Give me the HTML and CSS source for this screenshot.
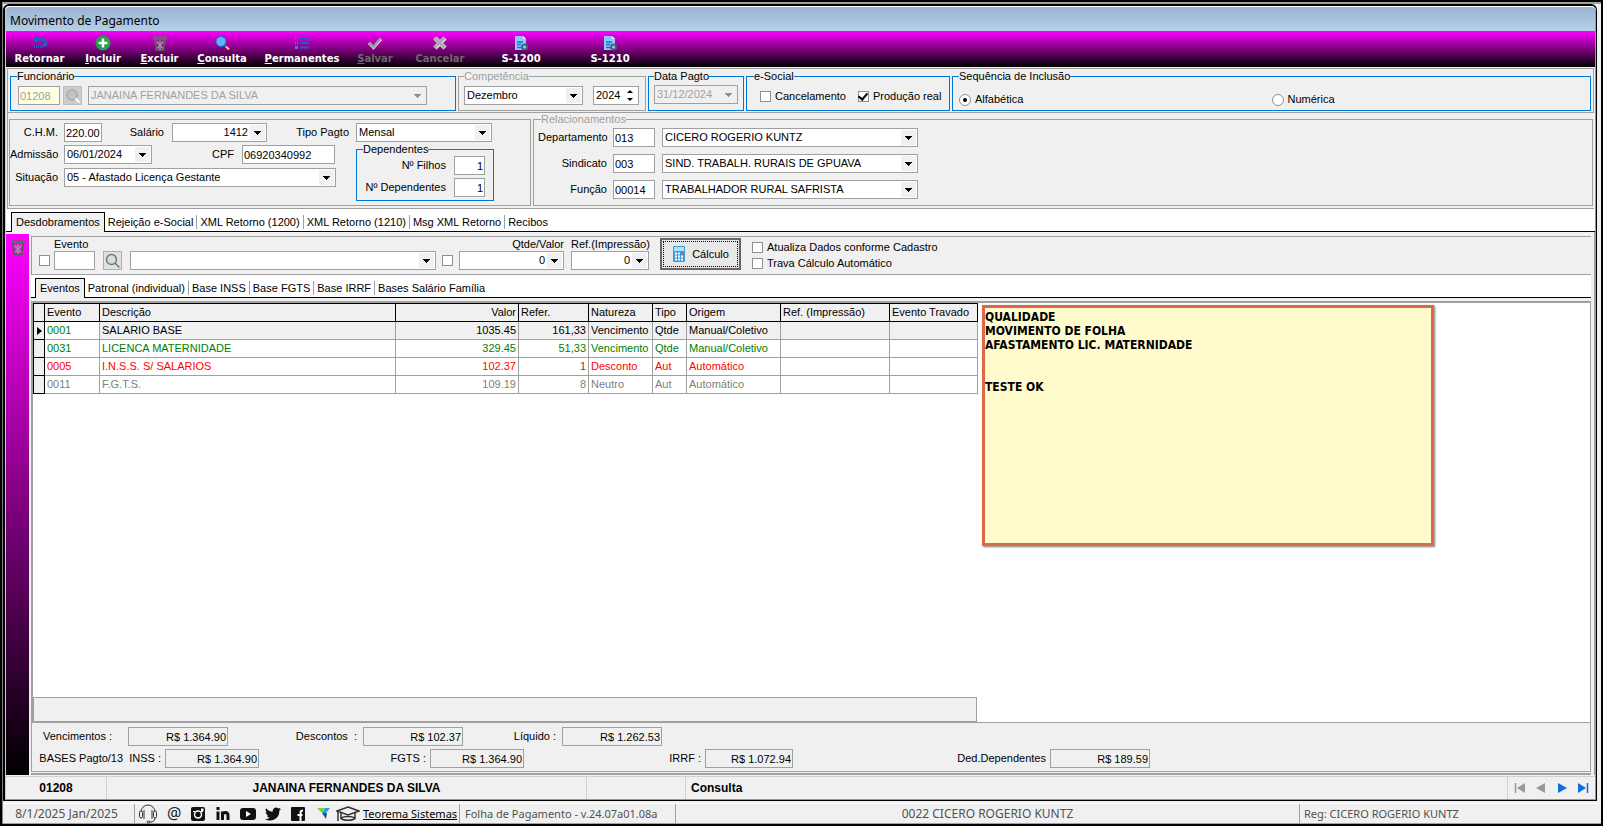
FILE: index.html
```html
<!DOCTYPE html>
<html lang="pt-BR">
<head>
    <meta charset="UTF-8">
    <meta name="viewport" content="width=device-width, initial-scale=1.0">
    <title>Movimento de Pagamento</title>
    <link rel="stylesheet" href="styles.css">
</head>
<body>
<div class="shell">
    <div class="window">
    <div class="window-inner">
        <h1 class="title-bar">Movimento de Pagamento</h1>

        <!-- Toolbar -->
        <div class="toolbar">
            <button type="button">
                <svg width="16" height="16" viewBox="0 0 16 16"><path d="M4 4.500h6.500q3 0 3 3V10H11" fill="none" stroke="#1565c8" stroke-width="2.500"/><path d="M5.500 0 1 4.500l4.500 4z" fill="#1565c8"/><path d="M2.500 10v3M4.500 10v3M6.500 10v3M8.500 10v3M10.500 10v3" stroke="#1565c8"/></svg>
                <span>Retornar</span>
            </button>
            <button type="button">
                <svg width="16" height="16" viewBox="0 0 16 16"><circle cx="8" cy="8" r="7.500" fill="#22a04b"/><path d="M8 3.500v9M3.500 8h9" stroke="#fff" stroke-width="2.500"/></svg>
                <span><u>I</u>ncluir</span>
            </button>
            <button type="button">
                <svg width="16" height="16" viewBox="0 0 16 16"><path d="M1 1.500h14v3.500H1z" fill="#666"/><path d="M3 5l1.500 10h7L13 5" fill="none" stroke="#5a5a5a" stroke-width="2"/><path d="M4.500 6.500l6.500 7M11.500 6.500l-6.500 7M8 5.500v3M8 12v3" stroke="#999" stroke-width="1.500"/></svg>
                <span><u>E</u>xcluir</span>
            </button>
            <button type="button">
                <svg width="16" height="16" viewBox="0 0 16 16"><circle cx="7" cy="6.500" r="5" fill="#5cb3fa" stroke="#1c6fc0" stroke-width="1"/><path d="M10.500 10l2 2" stroke="#1c6fc0" stroke-width="2"/><path d="M12 11.500l3 3" stroke="#f3d45c" stroke-width="2"/></svg>
                <span><u>C</u>onsulta</span>
            </button>
            <button type="button">
                <svg width="16" height="16" viewBox="0 0 16 16"><path d="M1 3h3M1 8h3" stroke="#c8452e" stroke-width="3" stroke-dasharray="1 1"/><path d="M1 12.500h3" stroke="#2e8bd8" stroke-width="3"/><path d="M6 3h9M6 8h9M6 12.500h9" stroke="#1b62b8" stroke-width="2"/></svg>
                <span><u>P</u>ermanentes</span>
            </button>
            <button type="button" disabled>
                <svg width="16" height="16" viewBox="0 0 16 16"><path d="M2 8l4.500 4.500L14 4" fill="none" stroke="#eee" stroke-width="3"/><path d="M2 8l4.500 4L13.500 3.500" fill="none" stroke="#999" stroke-width="2.500"/></svg>
                <span><u>S</u>alvar</span>
            </button>
            <button type="button" disabled>
                <svg width="16" height="16" viewBox="0 0 16 16"><path d="M3 3l10 10M13 3L3 13" stroke="#ddd" stroke-width="4.500"/><path d="M2.500 2.500l10 10M12.500 2.500l-10 10" stroke="#aaa" stroke-width="3"/></svg>
                <span>Cancelar</span>
            </button>
            <button type="button">
                <svg width="16" height="16" viewBox="0 0 16 16"><path d="M2 1h8l3 3v11H2z" fill="#8cc8f8"/><path d="M10 1v3h3z" fill="#d9eeff"/><path d="M4 7h6M4 9.500h4M4 12.500h4" stroke="#1470d0" stroke-width="1.500"/><circle cx="11.500" cy="12" r="2.500" fill="none" stroke="#46627c" stroke-width="2"/></svg>
                <span>S-1200</span>
            </button>
            <button type="button">
                <svg width="16" height="16" viewBox="0 0 16 16"><path d="M2 1h8l3 3v11H2z" fill="#8cc8f8"/><path d="M10 1v3h3z" fill="#d9eeff"/><path d="M4 7h6M4 9.500h4M4 12.500h4" stroke="#1470d0" stroke-width="1.500"/><circle cx="11.500" cy="12" r="2.500" fill="none" stroke="#46627c" stroke-width="2"/></svg>
                <span>S-1210</span>
            </button>
        </div>

        <!-- Filters -->
        <div class="filters">
            <fieldset class="group g-func">
                <legend>Funcionário</legend>
                <input class="field f-code" type="text" value="01208" aria-label="Código do funcionário" disabled>
                <button class="search-btn" type="button" aria-label="Pesquisar funcionário" disabled>
                    <svg width="16" height="16" viewBox="0 0 16 16"><circle cx="7" cy="7" r="5" fill="#c4c4c4" stroke="#aaa" stroke-width="1.500"/><path d="M10.500 10.500l4 4" stroke="#fff" stroke-width="2"/></svg>
                </button>
                <span class="combo c-func off"><select aria-label="Funcionário" disabled><option>JANAINA FERNANDES DA SILVA</option></select></span>
            </fieldset>
            <fieldset class="group g-comp muted">
                <legend>Competência</legend>
                <span class="combo c-mes"><select aria-label="Mês"><option>Dezembro</option></select></span>
                <span class="spin"><input type="text" value="2024" aria-label="Ano"></span>
            </fieldset>
            <fieldset class="group g-data">
                <legend>Data Pagto</legend>
                <span class="combo c-data off"><input type="text" value="31/12/2024" aria-label="Data Pagto" disabled></span>
            </fieldset>
            <fieldset class="group g-esocial">
                <legend>e-Social</legend>
                <label class="check"><input type="checkbox">Cancelamento</label>
                <label class="check"><input type="checkbox" checked>Produção real</label>
            </fieldset>
            <fieldset class="group g-seq">
                <legend>Sequência de Inclusão</legend>
                <label class="check"><input type="radio" name="seq" checked>Alfabética</label>
                <label class="check"><input type="radio" name="seq">Numérica</label>
            </fieldset>
        </div>

        <!-- Employee data -->
        <div class="employee">
            <div class="box contract">
                <div class="row">
                    <label class="lb lb-first" for="chm">C.H.M.</label>
                    <input class="field f-chm" id="chm" type="text" value="220.00">
                    <label class="lb lb-sal" for="salario">Salário</label>
                    <span class="combo c-sal num"><input id="salario" type="text" value="1412"></span>
                    <label class="lb lb-tipo" for="tipo">Tipo Pagto</label>
                    <span class="combo c-tipo"><select id="tipo"><option>Mensal</option></select></span>
                </div>
                <div class="contract-body">
                    <div class="stack">
                        <div class="row">
                            <label class="lb lb-first" for="admissao">Admissão</label>
                            <span class="combo c-adm"><input id="admissao" type="text" value="06/01/2024"></span>
                            <label class="lb lb-cpf" for="cpf">CPF</label>
                            <input class="field f-cpf" id="cpf" type="text" value="06920340992">
                        </div>
                        <div class="row">
                            <label class="lb lb-first" for="situacao">Situação</label>
                            <span class="combo c-sit"><select id="situacao"><option>05 - Afastado Licença Gestante</option></select></span>
                        </div>
                    </div>
                    <fieldset class="group g-dep">
                        <legend>Dependentes</legend>
                        <div class="row"><label class="lb" for="filhos">Nº Filhos</label><input class="field f-dep num" id="filhos" type="text" value="1"></div>
                        <div class="row"><label class="lb" for="ndep">Nº Dependentes</label><input class="field f-dep num" id="ndep" type="text" value="1"></div>
                    </fieldset>
                </div>
            </div>
            <fieldset class="group g-rel muted">
                <legend>Relacionamentos</legend>
                <div class="row">
                    <label class="lb lb-rel" for="depto">Departamento</label>
                    <input class="field f-rel" id="depto" type="text" value="013">
                    <span class="combo c-rel"><select aria-label="Departamento"><option>CICERO ROGERIO KUNTZ</option></select></span>
                </div>
                <div class="row">
                    <label class="lb lb-rel" for="sind">Sindicato</label>
                    <input class="field f-rel" id="sind" type="text" value="003">
                    <span class="combo c-rel"><select aria-label="Sindicato"><option>SIND. TRABALH. RURAIS DE GPUAVA</option></select></span>
                </div>
                <div class="row">
                    <label class="lb lb-rel" for="funcao">Função</label>
                    <input class="field f-rel" id="funcao" type="text" value="00014">
                    <span class="combo c-rel"><select aria-label="Função"><option>TRABALHADOR RURAL SAFRISTA</option></select></span>
                </div>
            </fieldset>
        </div>

        <div class="tabs">
            <button type="button" class="active">Desdobramentos</button>
            <button type="button">Rejeição e-Social</button>
            <button type="button">XML Retorno (1200)</button>
            <button type="button">XML Retorno (1210)</button>
            <button type="button">Msg XML Retorno</button>
            <button type="button">Recibos</button>
        </div>

        <!-- Work area -->
        <div class="work">
            <div class="side">
                <button type="button" aria-label="Excluir evento">
                    <svg width="16" height="16" viewBox="0 0 16 16"><path d="M1 1.500h14v3.500H1z" fill="#666"/><path d="M3 5l1.500 10h7L13 5" fill="none" stroke="#5a5a5a" stroke-width="2"/><path d="M4.500 6.500l6.500 7M11.500 6.500l-6.500 7M8 5.500v3M8 12v3" stroke="#999" stroke-width="1.500"/></svg>
                </button>
            </div>
            <div class="main">
                <div class="entry">
                    <input type="checkbox" aria-label="Fixar evento">
                    <div class="cell cell-ev">
                        <label class="lb" for="evento">Evento</label>
                        <input class="field f-ev" id="evento" type="text">
                    </div>
                    <button class="search-btn" type="button" aria-label="Pesquisar evento">
                        <svg width="16" height="16" viewBox="0 0 16 16"><circle cx="6.500" cy="6.500" r="5" fill="#cfe0e0" stroke="#777" stroke-width="1.500"/><path d="M10 10l4.500 4.500" stroke="#777" stroke-width="1.500"/></svg>
                    </button>
                    <span class="combo c-ev"><select aria-label="Descrição do evento"><option></option></select></span>
                    <input type="checkbox" aria-label="Fixar quantidade">
                    <div class="cell cell-qtde">
                        <label class="lb" for="qtde">Qtde/Valor</label>
                        <span class="combo num"><input id="qtde" type="text" value="0"></span>
                    </div>
                    <div class="cell cell-ref">
                        <label class="lb" for="ref">Ref.(Impressão)</label>
                        <span class="combo num"><input id="ref" type="text" value="0"></span>
                    </div>
                    <button class="calc-btn" type="button">
                        <svg width="14" height="16" viewBox="0 0 14 16"><rect x="1" width="12" height="16" rx="1" fill="#3d9be0"/><rect x="2" y="1" width="10" height="4" fill="#a9e2fb"/><path d="M3 7.500h2M6 7.500h2M3 10.500h2M6 10.500h2M9 10.500h2M3 13.500h2M6 13.500h2M9 13.500h2" stroke="#fff" stroke-width="2"/><path d="M9 7.500h2" stroke="#e04848" stroke-width="2"/></svg>
                        Cálculo
                    </button>
                    <div class="options">
                        <label class="check"><input type="checkbox">Atualiza Dados conforme Cadastro</label>
                        <label class="check"><input type="checkbox">Trava Cálculo Automático</label>
                    </div>
                </div>

                <div class="tabs sub">
                    <button type="button" class="active">Eventos</button>
                    <button type="button">Patronal (individual)</button>
                    <button type="button">Base INSS</button>
                    <button type="button">Base FGTS</button>
                    <button type="button">Base IRRF</button>
                    <button type="button">Bases Salário Família</button>
                </div>

                <div class="grid-area">
                    <div class="grid-col">
                        <table class="grid">
                            <colgroup>
                                <col class="w-mark"><col class="w-ev"><col class="w-desc"><col class="w-valor"><col class="w-refer"><col class="w-nat"><col class="w-tipo"><col class="w-orig"><col class="w-imp"><col class="w-trav">
                            </colgroup>
                            <thead>
                                <tr><th></th><th>Evento</th><th>Descrição</th><th class="num">Valor</th><th>Refer.</th><th>Natureza</th><th>Tipo</th><th>Origem</th><th>Ref. (Impressão)</th><th>Evento Travado</th></tr>
                            </thead>
                            <tbody>
                                <tr class="current"><td class="mark"></td><td class="code">0001</td><td>SALARIO BASE</td><td class="num">1035.45</td><td class="num">161,33</td><td>Vencimento</td><td>Qtde</td><td>Manual/Coletivo</td><td></td><td></td></tr>
                                <tr class="credit"><td class="mark"></td><td>0031</td><td>LICENCA MATERNIDADE</td><td class="num">329.45</td><td class="num">51,33</td><td>Vencimento</td><td>Qtde</td><td>Manual/Coletivo</td><td></td><td></td></tr>
                                <tr class="debit"><td class="mark"></td><td>0005</td><td>I.N.S.S. S/ SALARIOS</td><td class="num">102.37</td><td class="num">1</td><td>Desconto</td><td>Aut</td><td>Automático</td><td></td><td></td></tr>
                                <tr class="neutral"><td class="mark"></td><td>0011</td><td>F.G.T.S.</td><td class="num">109.19</td><td class="num">8</td><td>Neutro</td><td>Aut</td><td>Automático</td><td></td><td></td></tr>
                            </tbody>
                        </table>
                        <div class="grid-foot"></div>
                    </div>
                    <textarea class="note" aria-label="Observação" readonly>QUALIDADE
MOVIMENTO DE FOLHA
AFASTAMENTO LIC. MATERNIDADE


TESTE OK</textarea>
                </div>

                <!-- Totals -->
                <div class="totals">
                    <div class="row totals-top">
                        <label class="lb start" for="t-venc">Vencimentos :</label><input class="field num" id="t-venc" type="text" value="R$ 1.364.90" readonly>
                        <label class="lb" for="t-desc">Descontos &nbsp;:</label><input class="field num" id="t-desc" type="text" value="R$ 102.37" readonly>
                        <label class="lb" for="t-liq">Líquido :</label><input class="field num" id="t-liq" type="text" value="R$ 1.262.53" readonly>
                    </div>
                    <div class="row totals-bases">
                        <label class="lb" for="t-inss">BASES Pagto/13 &nbsp;INSS :</label><input class="field num" id="t-inss" type="text" value="R$ 1.364.90" readonly>
                        <label class="lb" for="t-fgts">FGTS :</label><input class="field num" id="t-fgts" type="text" value="R$ 1.364.90" readonly>
                        <label class="lb" for="t-irrf">IRRF :</label><input class="field num" id="t-irrf" type="text" value="R$ 1.072.94" readonly>
                        <label class="lb" for="t-ded">Ded.Dependentes</label><input class="field num" id="t-ded" type="text" value="R$ 189.59" readonly>
                    </div>
                </div>
            </div>
        </div>

        <div class="record-bar">
            <span class="rec-code">01208</span>
            <span class="rec-name">JANAINA FERNANDES DA SILVA</span>
            <span class="rec-gap"></span>
            <span class="rec-mode">Consulta</span>
            <div class="nav">
                <button type="button" aria-label="Primeiro"><svg width="12" height="10" viewBox="0 0 12 10"><path d="M1.500 0v10" stroke="#999" stroke-width="1.500"/><path d="M11 0v10L3 5z" fill="#999"/></svg></button>
                <button type="button" aria-label="Anterior"><svg width="12" height="10" viewBox="0 0 12 10"><path d="M10 0v10L1 5z" fill="#999"/></svg></button>
                <button type="button" aria-label="Próximo"><svg width="12" height="10" viewBox="0 0 12 10"><path d="M2 0v10l9-5z" fill="#0a6fe0"/></svg></button>
                <button type="button" aria-label="Último"><svg width="12" height="10" viewBox="0 0 12 10"><path d="M10.500 0v10" stroke="#0a6fe0" stroke-width="1.500"/><path d="M1 0v10l8-5z" fill="#0a6fe0"/></svg></button>
            </div>
        </div>
    </div>
    </div>

    <footer class="app-bar">
        <span class="app-date">8/1/2025 Jan/2025</span>
        <span class="social">
            <svg width="20" height="20" viewBox="0 0 20 20" fill="none" stroke="#333"><path d="M3 8a7 7 0 0 1 14 0" /><rect x="1.500" y="7" width="3" height="7" rx="1.500"/><rect x="15.500" y="7" width="3" height="7" rx="1.500"/><path d="M6 6v9M14 6v9M17 14c0 3-2 4-5 4"/><ellipse cx="10.500" cy="18" rx="1.500" ry="1"/></svg>
            <span class="at">@</span>
            <svg width="16" height="16" viewBox="0 0 16 16"><rect x="1" y="1" width="14" height="14" rx="2" fill="#111"/><circle cx="8" cy="8.500" r="3.500" fill="none" stroke="#fff" stroke-width="1.500"/><path d="M3 5.500h2M11 5.500h2" stroke="#fff"/><rect x="11" y="2.500" width="2.500" height="2.500" fill="#fff"/></svg>
            <svg width="16" height="16" viewBox="0 0 16 16" fill="none" stroke="#111" stroke-width="3"><path d="M3 5.500V14M7.500 14V5.500M7.500 9.500c0-4 5.500-4 5.500 0V14"/><path d="M3 1v3"/></svg>
            <svg width="16" height="16" viewBox="0 0 16 16"><rect y="2" width="16" height="12" rx="3" fill="#111"/><path d="M6 5v6l5-3z" fill="#fff"/></svg>
            <svg width="16" height="16" viewBox="0 0 24 24"><path d="M24 4.600a10 10 0 0 1-2.800.8 5 5 0 0 0 2.100-2.700 10 10 0 0 1-3.100 1.200 4.900 4.900 0 0 0-8.400 4.500A14 14 0 0 1 1.700 3.200a4.900 4.900 0 0 0 1.500 6.500 5 5 0 0 1-2.200-.6 4.900 4.900 0 0 0 3.900 4.900 5 5 0 0 1-2.200.1 4.900 4.900 0 0 0 4.600 3.400A10 10 0 0 1 0 19.500 14 14 0 0 0 21.500 7.100 10 10 0 0 0 24 4.600z" fill="#111"/></svg>
            <svg width="16" height="16" viewBox="0 0 16 16"><rect x="1" y="1" width="14" height="14" rx="1" fill="#111"/><path d="M10.500 15V6.500q0-2 2.500-2M7.500 9h5" fill="none" stroke="#fff" stroke-width="2"/></svg>
            <svg width="16" height="16" viewBox="0 0 16 16"><path d="M2 2h8l-3 5z" fill="#7bd13a"/><path d="M10 2h5l-4 5H7z" fill="#1ca0ea"/><path d="M7 7h5l-1 6z" fill="#1552a8"/></svg>
            <svg class="cap" width="24" height="20" viewBox="0 0 24 20" fill="none" stroke="#333" stroke-width="1.500"><path d="M12 3l11 4-11 4L1 7z"/><path d="M5 9v5c3-2 11-2 14 0V9M5 14c2 3 12 3 14 0M2 7.500V17"/></svg>
        </span>
        <a class="site" href="#">Teorema Sistemas</a>
        <span class="app-version">Folha de Pagamento - v.24.07a01.08a</span>
        <span class="app-company">0022 CICERO ROGERIO KUNTZ</span>
        <span class="app-reg">Reg: CICERO ROGERIO KUNTZ</span>
    </footer>
</div>
</body>
</html>
```
FILE: styles.css
```css
* {
    box-sizing: border-box;
}

body {
    margin: 0;
    padding: 2px;
    min-height: 100vh;
    display: flex;
    background: #000;
    color: #000;
    font-family: "Liberation Sans", Arial, sans-serif;
    font-size: 11px;
    line-height: 13px;
}

button, input, select, textarea {
    margin: 0;
    font: inherit;
    color: inherit;
}

svg {
    display: block;
    flex: none;
}

.shell {
    flex: 1;
    min-width: 0;
    display: flex;
    flex-direction: column;
    background: #f0f0f0;
    border-top: 2px solid #a0a0a0;
    border-left: 1px solid #808080;
}

.window {
    flex: 1;
    display: flex;
    margin-right: 4px;
    border: solid #000;
    border-width: 2px 1px 1px 2px;
    border-radius: 6px 6px 0 0;
}

.window-inner {
    flex: 1;
    min-width: 0;
    display: flex;
    flex-direction: column;
    border: 1px solid #40b8dc;
    border-top-color: #fff;
    border-left-color: #b9d1ea;
    border-radius: 5px 5px 0 0;
    overflow: hidden;
}

.title-bar {
    margin: 0;
    padding-left: 4px;
    height: 24px;
    background: linear-gradient(#99b4d1, #b7cfe8);
    font-family: "Noto Sans", sans-serif;
    font-size: 12px;
    font-weight: normal;
    line-height: 28px;
}

/* Toolbar */
.toolbar {
    display: grid;
    grid-template-columns: 67px 60px 53px 72px 88px 58px 72px 90px 88px;
    height: 36px;
    background: linear-gradient(#f0f, #000);
}

.toolbar button {
    display: flex;
    flex-direction: column;
    align-items: center;
    padding: 4px 0 0;
    border: 0;
    background: none;
    color: #fff;
    font-family: "DejaVu Sans", sans-serif;
    font-size: 10px;
    font-weight: bold;
    line-height: 16px;
}

.toolbar button:disabled {
    color: #6a6a6a;
}

/* Group boxes */
.group {
    min-width: 0;
    margin: 0;
    padding: 0 6px;
    border: 1px solid #0078d7;
}

.group legend {
    padding: 0;
}

.muted {
    border-color: #a0a0a0;
}

.muted legend {
    color: #a0a0a0;
}

.filters {
    display: flex;
    gap: 2px;
    margin: 1px 1px 0;
    padding: 1px 2px 1px;
    height: 45px;
    border: 1px solid #a0a0a0;
}

.filters .group {
    display: flex;
    align-items: flex-start;
    padding-top: 3px;
}

.g-func {
    width: 446px;
}

.g-comp {
    width: 188px;
    gap: 10px;
}

.g-comp.group {
    padding: 0 5px;
}

.g-data {
    width: 96px;
}

.g-data.group {
    padding: 0 5px;
}

.g-esocial {
    width: 204px;
    gap: 12px;
}

.g-esocial.group {
    padding-left: 13px;
}

.g-esocial legend {
    margin-left: -6px;
}

.g-esocial .check {
    margin-top: 4px;
}

.g-seq {
    flex: 1;
}

.g-seq .check {
    flex: 1;
    margin-top: 7px;
}

/* Fields */
.field,
.combo,
.spin {
    height: 19px;
    border: 1px solid #a0a0a0;
    background: #fff;
}

.field {
    padding: 0 1px;
    border-radius: 0;
}

.field:focus,
.combo select:focus,
.combo input:focus {
    outline: none;
}

.num,
.num input {
    text-align: right;
}

.combo {
    display: grid;
    grid-template-areas: "box";
}

.combo select,
.combo input {
    grid-area: box;
    width: 100%;
    min-width: 0;
    padding: 0 18px 0 2px;
    border: 0;
    border-radius: 0;
    background: none;
    appearance: none;
}

.combo::after {
    content: "";
    grid-area: box;
    justify-self: end;
    width: 15px;
    margin: 1px;
    background: linear-gradient(#000, #000) 4px 6px / 7px 1px no-repeat,
                linear-gradient(#000, #000) 5px 7px / 5px 1px no-repeat,
                linear-gradient(#000, #000) 6px 8px / 3px 1px no-repeat,
                linear-gradient(#000, #000) 7px 9px / 1px 1px no-repeat,
                #f0f0f0;
    pointer-events: none;
}

.combo.off {
    background: #f0f0f0;
}

.combo.off::after {
    opacity: 0.4;
}

.combo :disabled,
.field:disabled {
    color: #a0a0a0;
    opacity: 1;
}

.spin {
    display: grid;
    width: 46px;
    grid-template-columns: 1fr 15px;
    grid-template-rows: 1fr 1fr;
    padding: 1px;
}

.spin input {
    grid-area: 1 / 1 / 3 / 2;
    min-width: 0;
    width: 100%;
    padding: 0 1px;
    border: 0;
    background: none;
}

.spin::before,
.spin::after {
    content: "";
    grid-column: 2;
    place-self: center;
    border: solid transparent;
    border-width: 0 3px;
}

.spin::before {
    border-bottom: 3px solid #000;
}

.spin::after {
    border-top: 3px solid #000;
}

.search-btn {
    display: flex;
    align-items: center;
    justify-content: center;
    width: 19px;
    height: 19px;
    padding: 0;
    border: 1px solid #adadad;
    background: #e1e1e1;
}

.search-btn:disabled {
    border-color: #bfbfbf;
    background: #ccc;
}

.check {
    display: flex;
    align-items: center;
    gap: 4px;
    white-space: nowrap;
}

input[type="checkbox"],
input[type="radio"] {
    display: grid;
    flex: none;
    place-content: center;
    width: 11px;
    height: 11px;
    border: 1px solid #909090;
    background: #fff;
    appearance: none;
}

input[type="radio"] {
    width: 12px;
    height: 12px;
    border-radius: 50%;
}

input[type="radio"]:checked::after {
    content: "";
    width: 4px;
    height: 4px;
    border-radius: 50%;
    background: #000;
}

input[type="checkbox"]:checked::after {
    content: "";
    width: 4px;
    height: 7px;
    margin-bottom: 2px;
    border: solid #000;
    border-width: 0 2px 2px 0;
    transform: rotate(40deg);
}

.f-code {
    width: 42px;
    margin-left: 1px;
}

.f-code:disabled {
    background: #ffffe1;
}

.g-func .search-btn {
    margin: 0 6px 0 3px;
}

.c-func {
    width: 339px;
}

.c-mes {
    width: 119px;
    margin-top: 3px;
}

.g-comp .spin {
    margin-top: 3px;
}

.c-data {
    width: 86px;
    margin-top: 2px;
}

/* Employee data */
.row {
    display: flex;
    align-items: center;
}

.employee {
    display: flex;
    gap: 2px;
    margin: 0 1px;
    padding: 0 1px 2px;
    border: solid #a0a0a0;
    border-width: 0 0 1px 1px;
}

.box {
    margin-top: 6px;
    border: 1px solid #a0a0a0;
}

.contract {
    width: 522px;
    padding: 3px 0;
}

.lb-first {
    width: 54px;
    padding-right: 6px;
    text-align: right;
}

.f-chm {
    width: 38px;
}

.lb-sal {
    width: 70px;
    padding-right: 8px;
    text-align: right;
}

.c-sal {
    width: 95px;
}

.lb-tipo {
    width: 89px;
    padding-right: 7px;
    text-align: right;
}

.c-tipo {
    width: 136px;
}

.contract-body {
    display: flex;
    gap: 20px;
}

.stack {
    display: flex;
    flex-direction: column;
    gap: 4px;
    padding-top: 3px;
}

.c-adm {
    width: 88px;
}

.lb-cpf {
    width: 90px;
    padding-right: 8px;
    text-align: right;
}

.f-cpf {
    width: 93px;
}

.c-sit {
    width: 272px;
}

.g-dep {
    width: 138px;
    height: 58px;
    margin-top: 1px;
}

.g-dep .row {
    justify-content: flex-end;
    gap: 8px;
    padding-right: 2px;
    margin-bottom: 3px;
}

.f-dep {
    width: 31px;
}

.g-rel {
    flex: 1;
    display: flex;
    flex-direction: column;
    gap: 7px;
    height: 93px;
    padding: 2px 4px 0;
}

.g-rel legend {
    margin-left: 3px;
}

.lb-rel {
    width: 75px;
    padding-right: 6px;
    text-align: right;
}

.f-rel {
    width: 42px;
    margin-right: 7px;
}

.c-rel {
    width: 256px;
}

/* Tabs */
.tabs {
    display: flex;
    flex: none;
    align-items: center;
    height: 23px;
    padding: 3px 0 0 5px;
    border-bottom: 1px solid #000;
    background: #fff;
}

.tabs button {
    padding: 1px 3px 0;
    border: 0;
    border-right: 1px solid #a0a0a0;
    background: none;
}

.tabs button:last-child {
    border-right: 0;
}

.tabs .active {
    align-self: stretch;
    margin-bottom: -1px;
    padding: 0 4px;
    border: 1px solid #000;
    border-bottom: 0;
    background: #f0f0f0;
}

/* Work area */
.work {
    flex: 1;
    display: flex;
    gap: 2px;
    padding: 2px 3px 0 0;
    border-right: 1px solid #a0a0a0;
}

.side {
    width: 23px;
    background: linear-gradient(#f0f, #000);
}

.side button {
    display: block;
    margin: 5px auto 0;
    padding: 0;
    border: 0;
    background: none;
}

.main {
    flex: 1;
    min-width: 0;
    display: flex;
    flex-direction: column;
    padding-top: 2px;
    border-bottom: 2px solid #a0a0a0;
}

.entry {
    display: flex;
    align-items: flex-end;
    height: 39px;
    padding: 0 0 4px 7px;
    border: 1px solid #a0a0a0;
    border-right: 0;
}

.entry > input[type="checkbox"] {
    margin-bottom: 4px;
}

.cell {
    display: flex;
    flex-direction: column;
    justify-content: space-between;
}

.cell-ev {
    width: 41px;
    margin: 0 8px 0 4px;
}

.c-ev {
    width: 306px;
    margin: 0 6px 0 8px;
}

.cell-qtde {
    width: 105px;
    margin: 0 7px 0 6px;
}

.cell-qtde .lb {
    text-align: right;
}

.cell-ref {
    width: 78px;
    margin-right: 11px;
    white-space: nowrap;
}

.calc-btn {
    display: flex;
    align-items: center;
    justify-content: center;
    gap: 6px;
    width: 81px;
    height: 32px;
    padding: 0;
    border: 2px solid #666;
    background: #e8e8e8;
    outline: 1px dotted #000;
    outline-offset: -4px;
}

.options {
    display: flex;
    flex-direction: column;
    gap: 3px;
    margin-left: 11px;
}

.sub {
    padding-left: 4px;
}

/* Events grid */
.grid-area {
    flex: 1;
    display: flex;
    gap: 5px;
    margin-top: 3px;
    border: solid #a0a0a0;
    border-width: 2px 1px 1px 2px;
    background: #fff;
}

.grid-col {
    width: 944px;
    display: flex;
    flex-direction: column;
    justify-content: space-between;
}

.grid {
    width: 100%;
    table-layout: fixed;
    border-collapse: collapse;
}

.grid th,
.grid td {
    height: 18px;
    padding: 0 2px;
    border: 1px solid #a0a0a0;
    font-weight: normal;
    line-height: 13px;
    text-align: left;
    white-space: nowrap;
}

.grid th {
    border-color: #000;
    background: #f0f0f0;
}

.grid .num {
    text-align: right;
}

.grid .mark {
    padding: 0;
    border-color: #000;
    background: #f0f0f0;
}

.current td {
    background: #f0f0f0;
}

.current .code {
    background: #fff;
}

.current .mark::before {
    content: "";
    display: block;
    width: 0;
    margin-left: 3px;
    border: solid transparent;
    border-width: 4px 0 4px 5px;
    border-left-color: #000;
}

.credit,
.current .code {
    color: #008000;
}

.debit {
    color: #f00;
}

.neutral {
    color: #808080;
}

.w-mark { width: 11px; }
.w-ev { width: 55px; }
.w-desc { width: 296px; }
.w-valor { width: 123px; }
.w-refer { width: 70px; }
.w-nat { width: 64px; }
.w-tipo { width: 34px; }
.w-orig { width: 94px; }
.w-imp { width: 109px; }
.w-trav { width: 88px; }

.grid-foot {
    height: 25px;
    border: 1px solid #a0a0a0;
    background: #f0f0f0;
}

.note {
    width: 452px;
    height: 241px;
    margin-top: 2px;
    padding: 2px 0;
    border: 3px solid #dc6948;
    border-radius: 0;
    background: #fffbcc;
    box-shadow: 1px 1px 2px #808080;
    font-family: "DejaVu Sans Condensed", "DejaVu Sans", sans-serif;
    font-size: 12px;
    font-weight: bold;
    line-height: 14px;
    resize: none;
}

/* Totals */
.totals {
    display: flex;
    flex-direction: column;
    gap: 3px;
    margin-bottom: 1px;
    padding: 4px 0 3px;
    border: solid #a0a0a0;
    border-width: 0 1px 1px 1px;
}

.totals .row {
    display: grid;
}

.totals-top {
    grid-template-columns: 96px 100px 135px 100px 99px 100px;
}

.totals-bases {
    grid-template-columns: 133px 94px 171px 94px 181px 88px 257px 100px;
}

.totals .lb {
    padding-right: 6px;
    text-align: right;
    white-space: nowrap;
}

.totals-bases .lb {
    padding-right: 4px;
}

.totals .start {
    padding-left: 11px;
    text-align: left;
}

.totals .field {
    width: 100%;
    background: #f0f0f0;
}

/* Record bar */
.record-bar {
    display: flex;
    align-items: center;
    height: 23px;
    margin-top: 1px;
    border-top: 1px solid #d0d0d0;
    font-size: 12px;
    font-weight: bold;
}

.record-bar > span {
    align-self: stretch;
    border-right: 1px solid #d0d0d0;
    line-height: 22px;
    text-align: center;
}

.rec-code {
    width: 101px;
}

.rec-name {
    width: 480px;
}

.rec-gap {
    width: 99px;
}

.record-bar .rec-mode {
    flex: 1;
    padding-left: 5px;
    text-align: left;
}

.nav {
    display: flex;
    gap: 9px;
    padding: 0 6px;
}

.nav button {
    padding: 0;
    border: 0;
    background: none;
}

/* Application bar */
.app-bar {
    display: flex;
    align-items: center;
    height: 21px;
    margin-top: 2px;
    border-top: 1px solid #fff;
    border-bottom: 1px solid #a0a0a0;
    color: #505050;
    font-family: "Noto Sans", sans-serif;
    font-size: 12px;
    line-height: 19px;
    white-space: nowrap;
}

.app-date {
    width: 132px;
    padding-right: 4px;
    border-right: 1px solid #a0a0a0;
    text-align: center;
}

.social {
    display: flex;
    align-items: center;
    gap: 9px;
    width: 225px;
    padding-left: 3px;
}

.at {
    width: 16px;
    color: #222;
    font-size: 16px;
}

.social .cap {
    margin-left: -4px;
}

.site {
    width: 100px;
    padding-left: 3px;
    border-right: 1px solid #a0a0a0;
    color: #000;
    font-size: 11px;
}

.app-version {
    width: 216px;
    padding-left: 5px;
    border-right: 1px solid #a0a0a0;
    font-size: 11px;
}

.app-company {
    flex: 1;
    border-right: 1px solid #a0a0a0;
    text-align: center;
}

.app-reg {
    width: 301px;
    padding-left: 4px;
    font-size: 11px;
}
```
